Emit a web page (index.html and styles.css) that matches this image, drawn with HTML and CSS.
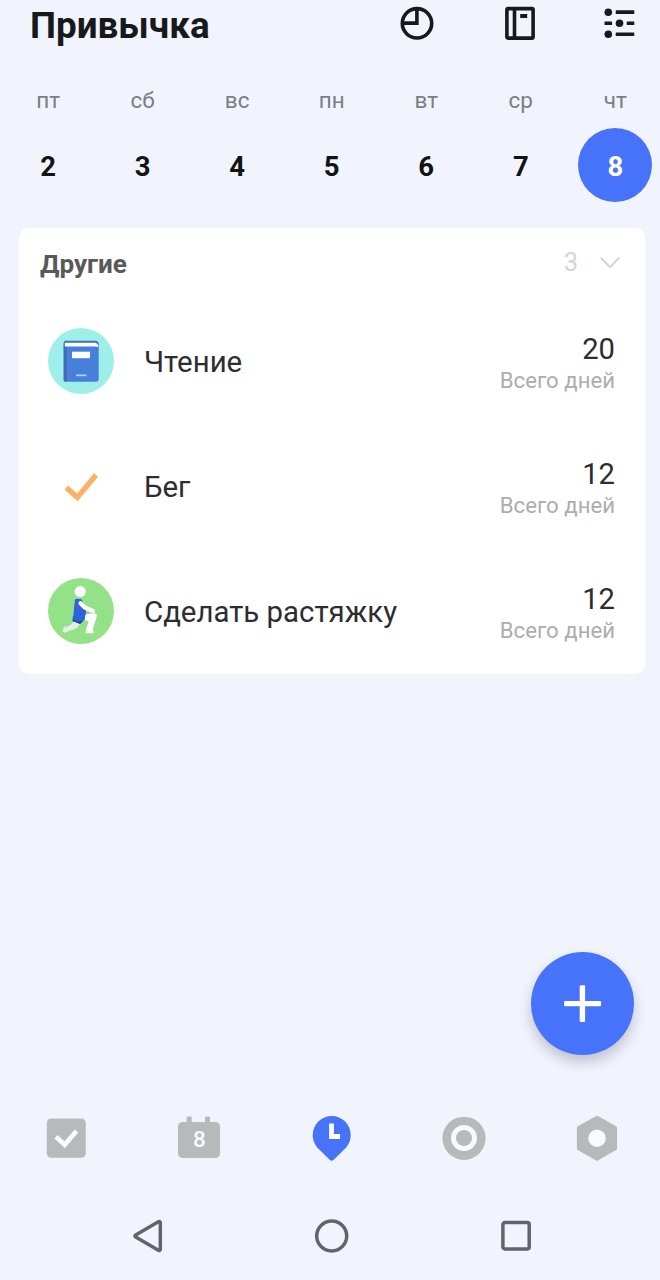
FILE: index.html
```html
<!DOCTYPE html>
<html lang="ru">
<head>
<meta charset="utf-8">
<title>Привычка</title>
<link rel="stylesheet" href="styles.css">
</head>
<body>
<div class="app">
  <header class="header">
    <h1 class="title">Привычка</h1>
    <div class="actions">
      <svg width="34" height="34" viewBox="0 0 34 34"><g fill="none" stroke="#171a1b" stroke-width="3.6"><circle cx="17" cy="17.300" r="14.700"/><path d="M16.900 2.300v14.800H2.500"/></g></svg>
      <svg width="31" height="34" viewBox="0 0 31 34"><g fill="none" stroke="#171a1b" stroke-width="3.6"><rect x="1.900" y="2.600" width="26.200" height="29.500" rx="1"/><path d="M9.500 2v30"/></g><path fill="#171a1b" d="M15.200 8h7v4h-7z"/></svg>
      <svg width="31" height="34" viewBox="0 0 31 34"><g fill="#171a1b"><circle cx="4.300" cy="6.300" r="3.800"/><circle cx="15.500" cy="17.300" r="3.800"/><circle cx="4.300" cy="28.300" r="3.800"/><rect x="11.700" y="4.300" width="18.600" height="3.700" rx=".6"/><rect x=".5" y="15.400" width="7.600" height="3.700" rx=".6"/><rect x="22.700" y="15.400" width="7.600" height="3.700" rx=".6"/><rect x="11.700" y="26.400" width="18.600" height="3.700" rx=".6"/></g></svg>
    </div>
  </header>

  <section class="week">
    <div class="day"><span class="name">пт</span><span class="date">2</span></div>
    <div class="day"><span class="name">сб</span><span class="date">3</span></div>
    <div class="day"><span class="name">вс</span><span class="date">4</span></div>
    <div class="day"><span class="name">пн</span><span class="date">5</span></div>
    <div class="day"><span class="name">вт</span><span class="date">6</span></div>
    <div class="day"><span class="name">ср</span><span class="date">7</span></div>
    <div class="day"><span class="name">чт</span><span class="date selected">8</span></div>
  </section>

  <main class="card">
    <div class="group">
      <h2 class="group-name">Другие</h2>
      <span class="count">3</span>
      <svg class="chevron" width="22" height="14" viewBox="0 0 22 14"><path d="M1.700 1.700 11 11.200l9.300-9.500" fill="none" stroke="#d2d2d2" stroke-width="1.900"/></svg>
    </div>
    <div class="habit">
      <svg class="icon" width="66" height="66" viewBox="0 0 66 66">
        <circle cx="33" cy="33" r="33" fill="#9eeeea"/>
        <path d="M17.500 12.700H47q3.700 0 3.700 4v4H15.700v-6q0-2 1.800-2z" fill="#416cb5"/>
        <path d="M16.500 14.700H47q3 .3 3.500 4.500H16.500z" fill="#fff"/>
        <path d="M15.700 18.500h31.800q3.200 0 3.200 3V51q0 2.700-2.700 2.700H17.700q-2 0-2-2z" fill="#4680da"/>
        <path d="M15.700 15v36.700q0 2 2 2h1V18.800h-2V15z" fill="#416cb5"/>
        <path d="M24 23.700h18v6.500H24z" fill="#fff"/>
        <path d="M28 46.500h10.500v1.700H28z" fill="#b5d6fb"/>
      </svg>
      <span class="label">Чтение</span>
      <div class="stat"><span class="value">20</span><span class="caption">Всего дней</span></div>
    </div>
    <div class="habit">
      <svg class="icon" width="66" height="66" viewBox="0 0 66 66"><path d="m18.300 34.500 11 10L48 22" fill="none" stroke="#ffb066" stroke-width="5.300"/></svg>
      <span class="label">Бег</span>
      <div class="stat"><span class="value">12</span><span class="caption">Всего дней</span></div>
    </div>
    <div class="habit">
      <svg class="icon" width="66" height="66" viewBox="0 0 66 66">
        <circle cx="33" cy="33" r="33" fill="#93e288"/>
        <path d="m26 43.500 6 2.500q-2.500 5.500-9.500 6.200L17 54.700l-2.500-1.500 1.600-4.500q5.400.3 9.900-5.200z" fill="#e6eee4"/>
        <path d="m25 38-.5 5 7.500 3 3-2.500z" fill="#1b3f91"/>
        <path d="M27 21.500q1.800-1.500 6.500-.2L37 29l2.500 13-8.800 1.800-5.700-2 1-11.300z" fill="#2f63dc"/>
        <circle cx="32.200" cy="13.600" r="5.600" fill="#fff"/>
        <path d="m32.500 25.300 4 4L44.800 33" fill="none" stroke="#fff" stroke-width="4.300" stroke-linecap="round" stroke-linejoin="round"/>
        <path d="M37.500 36.300q5.500-1 10-.8 1.700.6 1.300 2.700l-4.300 14 1.200 1.300v1.700h-8v-2.300l3-10-4.200-.5z" fill="#fff"/>
      </svg>
      <span class="label">Сделать растяжку</span>
      <div class="stat"><span class="value">12</span><span class="caption">Всего дней</span></div>
    </div>
  </main>

  <div class="fab-row">
    <button class="fab" aria-label="Добавить"><svg width="38" height="38" viewBox="0 0 38 38"><g fill="#fff"><rect x="15.700" y=".2" width="5.400" height="36.800" rx="1.200"/><rect x=".1" y="15.900" width="37" height="5.400" rx="1.200"/></g></svg></button>
  </div>

  <nav class="tabs">
    <svg width="46" height="46" viewBox="0 0 46 46"><rect x="3.800" y="3.400" width="39" height="39.400" rx="4.500" fill="#b7baba"/><path d="m13 21.700 8.700 8L33.500 16" fill="none" stroke="#f8faff" stroke-width="4.800"/></svg>
    <svg width="46" height="46" viewBox="0 0 46 46"><g fill="#b7baba"><rect x="2" y="7" width="42" height="36" rx="4.500"/><rect x="10.700" y="1.600" width="5" height="8" rx="1"/><rect x="29" y="1.600" width="5" height="8" rx="1"/></g><text class="tab-date" x="23.500" y="31.500" text-anchor="middle">8</text></svg>
    <svg width="46" height="46" viewBox="0 0 46 46"><path d="M22.700 1A19 19 0 0 1 41.700 20c0 6-2.500 10.500-6 14L24.700 44.800q-2 2-4 0L9.700 34c-3.500-3.500-6-8-6-14A19 19 0 0 1 22.700 1z" fill="#4772fa"/><path d="M22.500 11v10.500h6.200" fill="none" stroke="#fff" stroke-width="4.800" stroke-linecap="square"/></svg>
    <svg width="46" height="46" viewBox="0 0 46 46"><circle cx="23" cy="23.300" r="21.600" fill="#b7baba"/><circle cx="23" cy="23" r="10.500" fill="none" stroke="#f8faff" stroke-width="5"/></svg>
    <svg width="46" height="46" viewBox="0 0 46 46"><path d="m23 2.500 18.300 10.300v20.700L23 44 4.700 33.500V12.800z" fill="#b7baba" stroke="#b7baba" stroke-width="3.600" stroke-linejoin="round"/><circle cx="23" cy="23.200" r="8.700" fill="#f8faff"/></svg>
  </nav>

  <footer class="system">
    <svg width="36" height="36" viewBox="0 0 36 36"><path d="M30.300 5q0-2-1.900-1.300L5.700 17q-1.500 1 0 2l22.700 13.300q1.900.7 1.900-1.300z" fill="none" stroke="#61656b" stroke-width="3.500" stroke-linejoin="round"/></svg>
    <svg width="36" height="36" viewBox="0 0 36 36"><circle cx="17.700" cy="18" r="15" fill="none" stroke="#61656b" stroke-width="3.500"/></svg>
    <svg width="36" height="36" viewBox="0 0 36 36"><rect x="4.900" y="4.600" width="26.300" height="26.300" rx="1.800" fill="none" stroke="#61656b" stroke-width="3.500"/></svg>
  </footer>
</div>
</body>
</html>
```
FILE: styles.css
```css
* { box-sizing: border-box; }

body {
  margin: 0;
  background: #f1f4fd;
  font-family: Roboto, "Noto Sans", sans-serif;
}

svg { display: block; flex: none; }

.app {
  width: 660px;
  height: 1280px;
  display: flex;
  flex-direction: column;
  overflow: hidden;
}

.header {
  height: 84px;
  padding: 0 25px 0 30px;
  display: flex;
  justify-content: space-between;
  align-items: flex-start;
}

.title {
  margin: 0;
  font-size: 36.800px;
  line-height: 51px;
  font-weight: 700;
  color: #171a1b;
}

.actions { display: flex; gap: 68px; padding-top: 6px; }
.actions svg:first-child { margin-right: 3.500px; }

.week {
  height: 144px;
  display: grid;
  grid-template-columns: repeat(7, 94.550px);
  margin-left: .800px;
}

.day { display: flex; flex-direction: column; align-items: center; gap: 12px; }
.name { font-size: 22.500px; line-height: 32px; font-weight: 400; color: #7b7e84; }

.date {
  width: 74px;
  height: 74px;
  border-radius: 50%;
  text-align: center;
  font-size: 27.500px;
  line-height: 77.500px;
  font-weight: 700;
  color: #111415;
}

.selected { background: #4772fa; color: #fff; }

.card {
  height: 446px;
  margin: 0 15px 0 19px;
  border-radius: 10px;
  background: #fff;
  display: grid;
  grid-template-rows: 70px 125px 125px 126px;
}

.group { display: flex; align-items: center; padding: 0 24px 0 21px; }
.group-name { margin: 2px auto 0 0; font-size: 26.100px; font-weight: 700; color: #58595a; }
.count { font-size: 25.500px; line-height: 30px; font-weight: 400; color: #d5d5d5; margin: -2px 21px 0 0; }

.habit { display: flex; align-items: center; padding: 0 30px 0 29px; }
.label { margin: 2px auto 0 30px; font-size: 29.400px; color: #2c2d2f; }
.stat { display: flex; flex-direction: column; align-items: flex-end; padding-top: 5px; }
.value { font-size: 29.200px; line-height: 34px; color: #2c2d2f; }
.caption { font-size: 22.200px; line-height: 29px; color: #adadad; }

.fab-row { height: 429px; padding: 278px 26px 0 0; display: flex; justify-content: flex-end; }

.fab {
  width: 103px;
  height: 103px;
  padding: 0;
  border: 0;
  border-radius: 50%;
  background: #4772fa;
  box-shadow: 0 7px 13px rgba(30, 35, 50, .24);
  display: grid;
  place-items: center;
}

.tabs {
  height: 70px;
  display: grid;
  grid-template-columns: repeat(5, 132.700px);
  place-items: center;
}

.tab-date { font-size: 22.500px; font-weight: 500; fill: #f8faff; }

.system {
  height: 107px;
  padding: 45px 126px 0 130px;
  display: flex;
  justify-content: space-between;
}
```
